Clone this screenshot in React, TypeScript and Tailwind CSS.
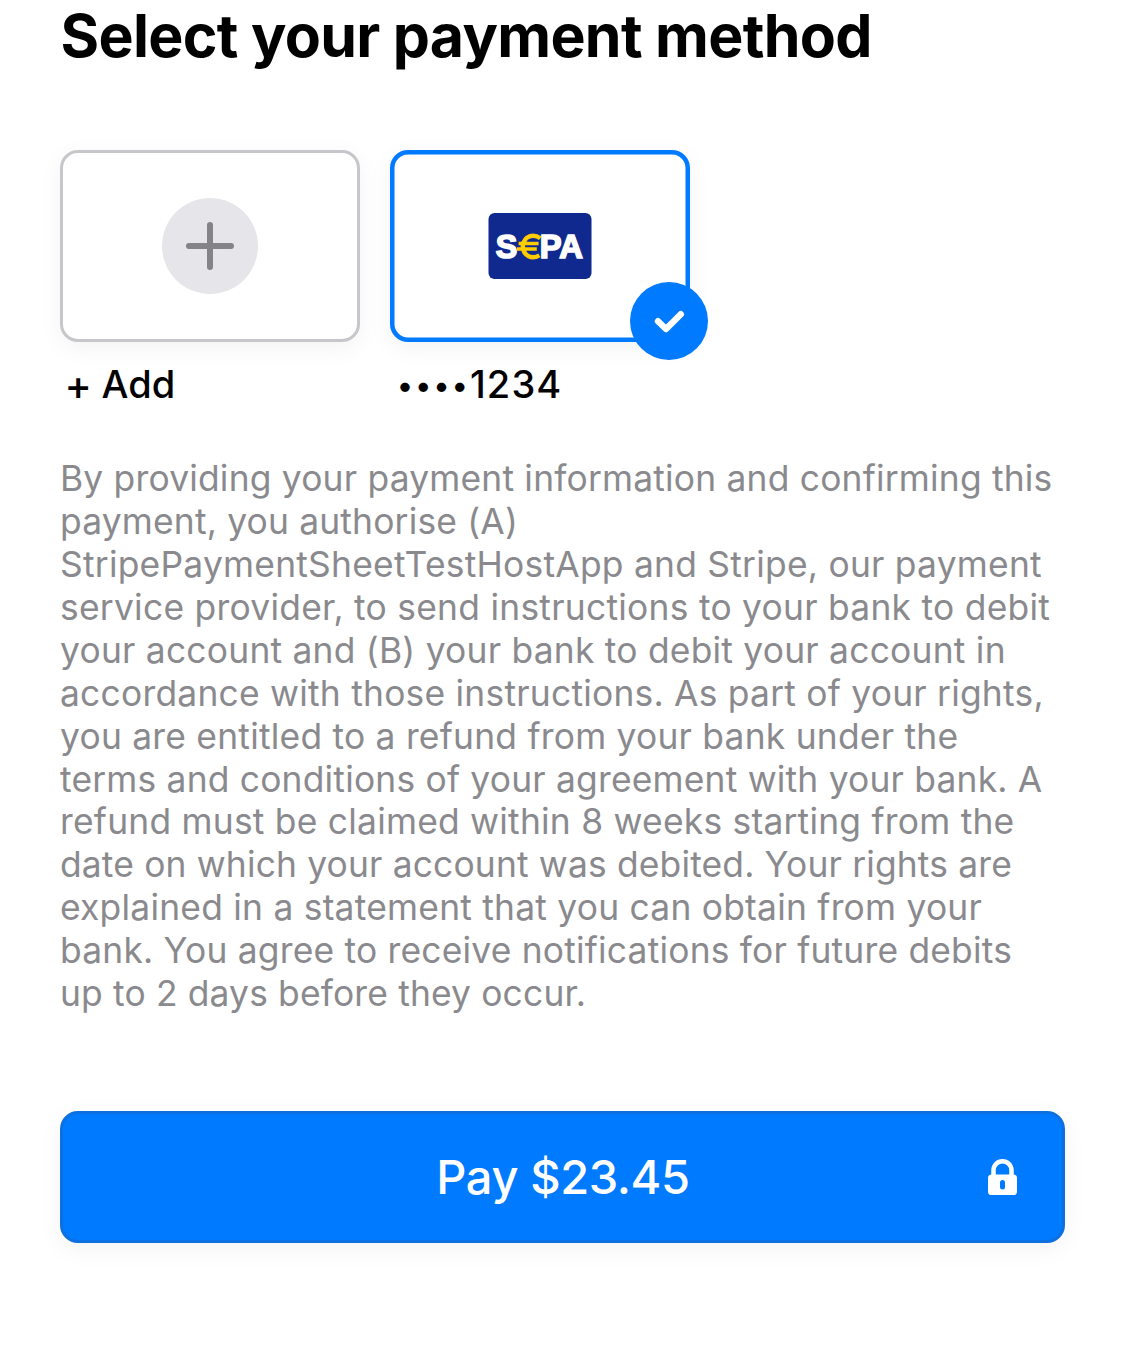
const mandateLines = [
  { text: 'By providing your payment information and confirming this', tracking: 'tracking-[0.2px]' },
  { text: 'payment, you authorise (A)', tracking: 'tracking-[0.18px]' },
  { text: 'StripePaymentSheetTestHostApp and Stripe, our payment', tracking: 'tracking-[0.24px]' },
  { text: 'service provider, to send instructions to your bank to debit', tracking: 'tracking-[0.26px]' },
  { text: 'your account and (B) your bank to debit your account in', tracking: 'tracking-[0.23px]' },
  { text: 'accordance with those instructions. As part of your rights,', tracking: 'tracking-[0.23px]' },
  { text: 'you are entitled to a refund from your bank under the', tracking: 'tracking-[0.23px]' },
  { text: 'terms and conditions of your agreement with your bank. A', tracking: 'tracking-[0.2px]' },
  { text: 'refund must be claimed within 8 weeks starting from the', tracking: 'tracking-[0.23px]' },
  { text: 'date on which your account was debited. Your rights are', tracking: 'tracking-[0.16px]' },
  { text: 'explained in a statement that you can obtain from your', tracking: 'tracking-[0.23px]' },
  { text: 'bank. You agree to receive notifications for future debits', tracking: 'tracking-[0.2px]' },
  { text: 'up to 2 days before they occur.', tracking: 'tracking-[0.16px]' },
];

function PlusIcon() {
  return (
    <svg width="96" height="96" viewBox="0 0 96 96" fill="none">
      <circle cx="48" cy="48" r="48" fill="#e5e5ea" />
      <path d="M48 27v42M27 48h42" stroke="#838388" strokeWidth="6" strokeLinecap="round" />
    </svg>
  );
}

function SepaLogo() {
  return (
    <svg width="104" height="66" viewBox="0 0 104 66" fontFamily="'Liberation Sans', Arial, sans-serif" fontWeight="700" fontSize="33.5">
      <rect x="0.5" width="103" height="66" rx="6" fill="#10298e" />
      <g fill="#fff" stroke="#fff" strokeWidth="1.7">
        <text x="7.8" y="44.8" textLength="21.5" lengthAdjust="spacingAndGlyphs">S</text>
        <text x="51.8" y="44.8" textLength="43" lengthAdjust="spacingAndGlyphs">PA</text>
      </g>
      <g stroke="#ffcc00" fill="none">
        <path d="M52.3 25.2C45.5 20.4 36.2 22.6 34.8 33c.7 10.8 9.2 13.6 16.6 9.4" strokeWidth="4.4" />
        <path d="M30.6 30.5H50.6M29 36H48.8" strokeWidth="3.4" />
      </g>
    </svg>
  );
}

function LockIcon() {
  return (
    <svg width="30" height="36" viewBox="0 0 30 36" fill="none">
      <path d="M5.5 17v-5.7a9 9 0 0 1 18 0V17" stroke="#fff" strokeWidth="4.5" />
      <rect y="15.5" width="29" height="20.5" rx="3.6" fill="#fff" />
      <rect x="12" y="21" width="5" height="9.5" rx="2.5" fill="#007aff" />
    </svg>
  );
}

export default function App() {
  return (
    <main className="flex h-[1363px] w-[1125px] flex-col bg-white px-[60px] pt-1 font-['Inter',sans-serif]">
      <h1 className="h-[64px] pl-[0.5px] text-[59px] leading-[64px] font-bold tracking-[-0.69px] whitespace-nowrap text-black">
        Select your payment method
      </h1>
      <div className="mt-[82px] flex gap-[30px]">
        <div className="w-[300px]">
          <button className="flex h-[192px] w-[300px] items-center justify-center rounded-[18px] border-[3px] border-[#c6c6cb] bg-white shadow-[0_6px_24px_rgba(0,0,0,0.05)]">
            <PlusIcon />
          </button>
          <div className="mt-[18px] flex h-[48px] pl-[4.5px] text-[38px] leading-[49px] font-medium whitespace-nowrap text-black">
            <span className="w-[37px] pt-px text-[41px]">+</span>
            <span>Add</span>
          </div>
        </div>
        <div className="w-[300px]">
          <button className="relative flex h-[192px] w-[300px] items-center justify-center rounded-[18px] bg-white shadow-[inset_0_0_0_4.5px_#007aff,0_6px_24px_rgba(0,0,0,0.05)]">
            <SepaLogo />
            <span className="absolute -right-[18px] -bottom-[18px] size-[78px] rounded-full bg-[#007aff]">
              <svg width="78" height="78" viewBox="0 0 78 78" fill="none">
                <path d="M28 39.2L36 47L50.8 32.2" stroke="#fff" strokeWidth="6.4" strokeLinecap="round" strokeLinejoin="round" />
              </svg>
            </span>
          </button>
          <div className="mt-[18px] flex h-[48px] pl-[7px] text-[38px] leading-[49px] font-medium whitespace-nowrap text-black">
            <span className="flex w-[73px] pt-px text-[30px]">
              <span className="w-[18.3px]">•</span>
              <span className="w-[18.3px]">•</span>
              <span className="w-[18.3px]">•</span>
              <span className="w-[18.3px]">•</span>
            </span>
            <span className="tracking-[1.1px]">1234</span>
          </div>
        </div>
      </div>
      <div className="mt-[50.4px] text-[35.4px] leading-[42.88px] text-[#8a8a8e]">
        {mandateLines.map((line) => (
          <div key={line.text} className={`whitespace-nowrap ${line.tracking}`}>
            {line.text}
          </div>
        ))}
      </div>
      <button className="relative mt-[95.2px] flex h-[132px] w-[1005px] shrink-0 items-center justify-center rounded-[18px] border-[3px] border-[#0c70e0] bg-[#007aff] pl-px text-[47px] font-[450] tracking-[-0.4px] text-white shadow-[0_6px_24px_rgba(0,0,0,0.05)]">
        Pay $23.45
        <span className="absolute top-[45px] right-[44px]">
          <LockIcon />
        </span>
      </button>
    </main>
  );
}
